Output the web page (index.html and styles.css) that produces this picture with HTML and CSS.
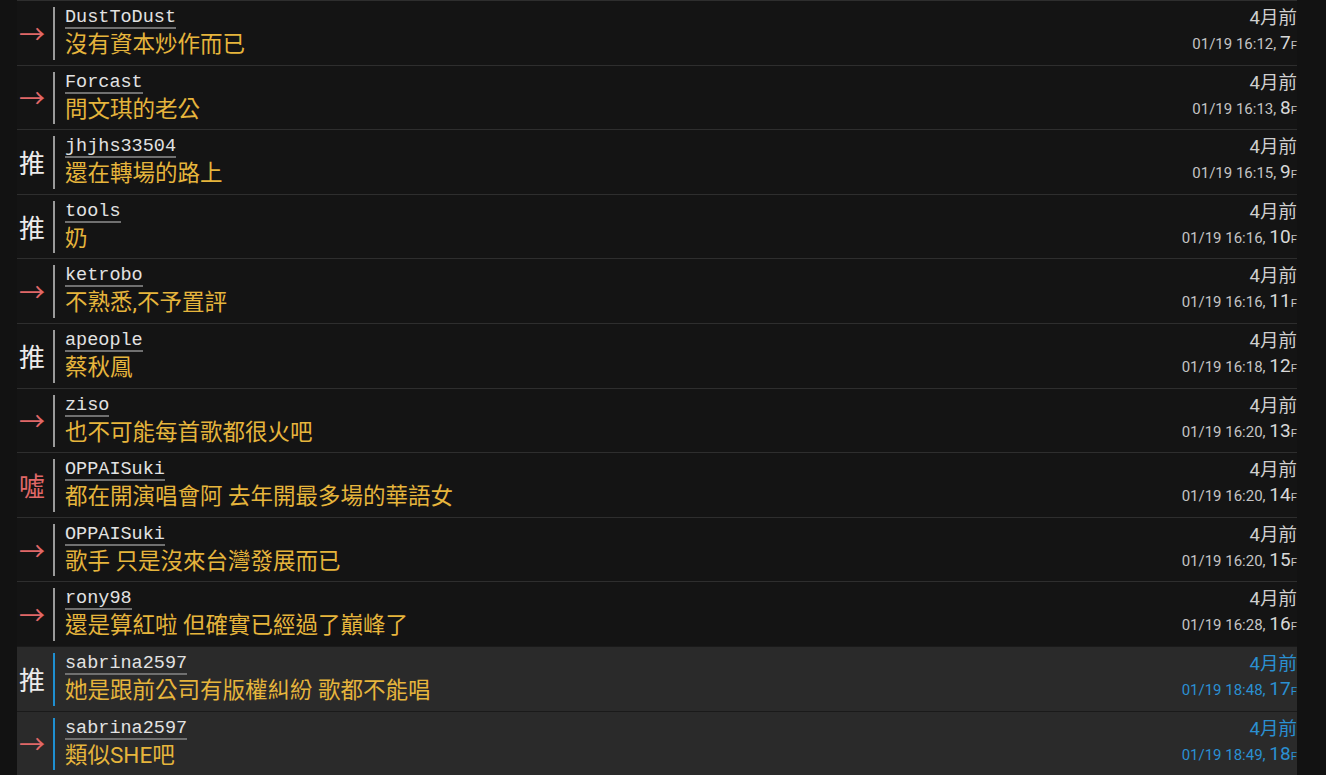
FILE: index.html
```html
<!DOCTYPE html>
<html lang="zh-Hant">
<head>
<meta charset="utf-8">
<title>Comments</title>
<link rel="stylesheet" href="styles.css">
</head>
<body>
<div class="list">
  <div class="row">
    <span class="tag arrow">→</span>
    <div class="body"><div class="user"><span>DustToDust</span></div><div class="text">沒有資本炒作而已</div></div>
    <div class="meta"><div class="ago">4月前</div><div class="date">01/19 16:12, <b>7</b><small>F</small></div></div>
  </div>
  <div class="row">
    <span class="tag arrow">→</span>
    <div class="body"><div class="user"><span>Forcast</span></div><div class="text">問文琪的老公</div></div>
    <div class="meta"><div class="ago">4月前</div><div class="date">01/19 16:13, <b>8</b><small>F</small></div></div>
  </div>
  <div class="row">
    <span class="tag push">推</span>
    <div class="body"><div class="user"><span>jhjhs33504</span></div><div class="text">還在轉場的路上</div></div>
    <div class="meta"><div class="ago">4月前</div><div class="date">01/19 16:15, <b>9</b><small>F</small></div></div>
  </div>
  <div class="row">
    <span class="tag push">推</span>
    <div class="body"><div class="user"><span>tools</span></div><div class="text">奶</div></div>
    <div class="meta"><div class="ago">4月前</div><div class="date">01/19 16:16, <b>10</b><small>F</small></div></div>
  </div>
  <div class="row">
    <span class="tag arrow">→</span>
    <div class="body"><div class="user"><span>ketrobo</span></div><div class="text">不熟悉,不予置評</div></div>
    <div class="meta"><div class="ago">4月前</div><div class="date">01/19 16:16, <b>11</b><small>F</small></div></div>
  </div>
  <div class="row">
    <span class="tag push">推</span>
    <div class="body"><div class="user"><span>apeople</span></div><div class="text">蔡秋鳳</div></div>
    <div class="meta"><div class="ago">4月前</div><div class="date">01/19 16:18, <b>12</b><small>F</small></div></div>
  </div>
  <div class="row">
    <span class="tag arrow">→</span>
    <div class="body"><div class="user"><span>ziso</span></div><div class="text">也不可能每首歌都很火吧</div></div>
    <div class="meta"><div class="ago">4月前</div><div class="date">01/19 16:20, <b>13</b><small>F</small></div></div>
  </div>
  <div class="row">
    <span class="tag boo">噓</span>
    <div class="body"><div class="user"><span>OPPAISuki</span></div><div class="text">都在開演唱會阿 去年開最多場的華語女</div></div>
    <div class="meta"><div class="ago">4月前</div><div class="date">01/19 16:20, <b>14</b><small>F</small></div></div>
  </div>
  <div class="row">
    <span class="tag arrow">→</span>
    <div class="body"><div class="user"><span>OPPAISuki</span></div><div class="text">歌手 只是沒來台灣發展而已</div></div>
    <div class="meta"><div class="ago">4月前</div><div class="date">01/19 16:20, <b>15</b><small>F</small></div></div>
  </div>
  <div class="row">
    <span class="tag arrow">→</span>
    <div class="body"><div class="user"><span>rony98</span></div><div class="text">還是算紅啦 但確實已經過了巔峰了</div></div>
    <div class="meta"><div class="ago">4月前</div><div class="date">01/19 16:28, <b>16</b><small>F</small></div></div>
  </div>
  <div class="row hl">
    <span class="tag push">推</span>
    <div class="body"><div class="user"><span>sabrina2597</span></div><div class="text">她是跟前公司有版權糾紛 歌都不能唱</div></div>
    <div class="meta"><div class="ago">4月前</div><div class="date">01/19 18:48, <b>17</b><small>F</small></div></div>
  </div>
  <div class="row hl">
    <span class="tag arrow">→</span>
    <div class="body"><div class="user"><span>sabrina2597</span></div><div class="text">類似SHE吧</div></div>
    <div class="meta"><div class="ago">4月前</div><div class="date">01/19 18:49, <b>18</b><small>F</small></div></div>
  </div>
</div>
</body>
</html>
```
FILE: styles.css
```css
html, body {
  margin: 0;
  padding: 0;
  background: #121212;
  height: 100%;
  overflow: hidden;
}

.list {
  margin-left: 17px;
  width: 1280px;
}

.row {
  display: flex;
  align-items: stretch;
  height: 64.6px;
  box-sizing: border-box;
  border-top: 1px solid #2e2e2e;
  background: #141414;
}

.row.hl {
  background: #2a2a2a;
  border-top-color: #1a1a1a;
}

.tag {
  width: 34px;
  padding-left: 2px;
  align-self: center;
  font-family: "Noto Sans CJK TC", "Noto Sans", sans-serif;
  font-size: 26px;
  line-height: 30px;
}

.tag.push { color: #ececec; }
.tag.arrow { color: #e06868; }
.tag.boo { color: #e06868; }

.body {
  flex: 1;
  margin: 6px 0 5px;
  border-left: 2px solid #9a9a9a;
  padding-left: 10px;
}

.row.hl .body { border-left-color: #1f8fd0; }

.user {
  height: 22px;
  padding-top: 1px;
}

.user span {
  display: inline-block;
  font-family: "Liberation Mono", "DejaVu Sans Mono", monospace;
  font-size: 18.5px;
  line-height: 18px;
  color: #e2e2e2;
  border-bottom: 2px solid #707070;
}

.text {
  font-family: "Roboto", "Noto Sans CJK TC", sans-serif;
  font-size: 22.5px;
  line-height: 28px;
  color: #e6b53c;
}

.meta {
  text-align: right;
  font-family: "Roboto", "Noto Sans CJK TC", sans-serif;
  color: #cfcfcf;
  padding-top: 5px;
}

.ago {
  font-size: 18.5px;
  line-height: 24px;
}

.date {
  font-size: 15px;
  line-height: 26px;
  color: #c4c4c4;
}

.date b {
  font-weight: 400;
  font-size: 19px;
  color: #d8d8d8;
}

.date small {
  font-size: 11.5px;
}

.row.hl .meta,
.row.hl .date,
.row.hl .date b { color: #2a90d2; }
```
